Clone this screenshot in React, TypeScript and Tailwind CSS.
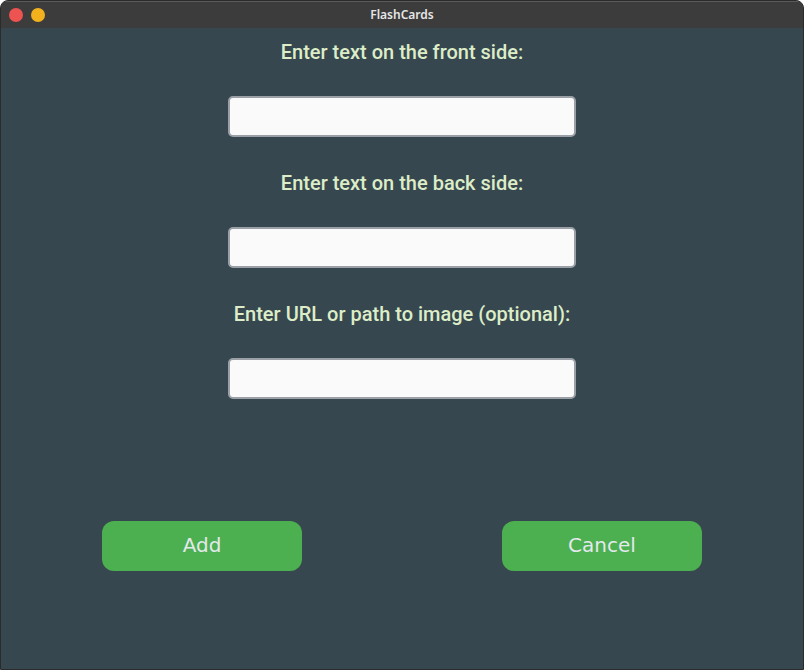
import React from 'react';

const fields = [
  'Enter text on the front side:',
  'Enter text on the back side:',
  'Enter URL or path to image (optional):',
];

export default function App() {
  return (
    <div className="w-[804px] h-[670px] flex flex-col bg-[#37474f] border border-[#2b2b2b] rounded-t-[8px] overflow-hidden">
      {/* Title bar */}
      <div className="h-[27px] shrink-0 bg-[#3c3c3c] border-t border-[#5a5a5a] flex items-center relative">
        <div className="flex items-center gap-[8px] pl-[8px]">
          <span className="w-[14px] h-[14px] rounded-full bg-[#ed5350]" />
          <span className="w-[14px] h-[14px] rounded-full bg-[#f4b11e]" />
        </div>
        <div
          className="absolute inset-0 flex items-center justify-center text-[12px] font-semibold text-[#e6e6e6]"
          style={{ fontFamily: '"Noto Sans", "DejaVu Sans", sans-serif' }}
        >
          FlashCards
        </div>
      </div>

      {/* Body */}
      <div className="flex-1 flex flex-col items-center pt-[12px]">
        {fields.map((label, i) => (
          <div key={label} className={`flex flex-col items-center ${i > 0 ? 'mt-[34px]' : ''}`}>
            <div
              className="leading-[24px] text-[20px] font-medium text-[#dcedc8]"
              style={{ fontFamily: 'Roboto, "Noto Sans", sans-serif' }}
            >
              {label}
            </div>
            <input
              type="text"
              className="mt-[32px] w-[348px] h-[41px] bg-[#fafafa] border-2 border-[#9aa0a6] rounded-[5px] outline-none px-2"
            />
          </div>
        ))}

        <div className="mt-[122px] flex justify-center gap-[200px]">
          {['Add', 'Cancel'].map((b) => (
            <button
              key={b}
              className="w-[200px] h-[50px] rounded-[12px] bg-[#4caf50] text-[20px] leading-[24px] pb-[2px] text-[#e3e9ec]"
              style={{ fontFamily: '"DejaVu Sans", sans-serif' }}
            >
              {b}
            </button>
          ))}
        </div>
      </div>
    </div>
  );
}
